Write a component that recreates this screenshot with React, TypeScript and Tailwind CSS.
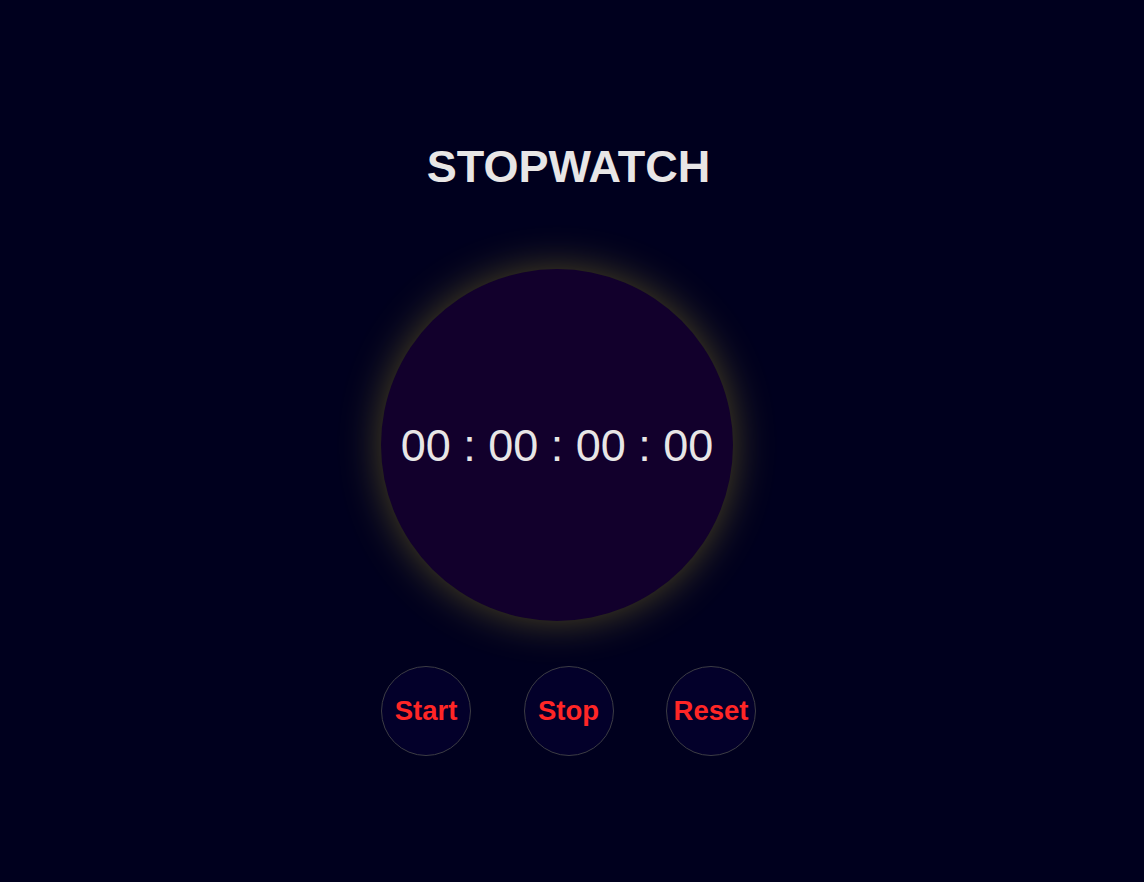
export default function App() {
  return (
    <div
      className="min-h-[882px] w-full bg-[#00001e] flex justify-center"
      style={{ fontFamily: '"Liberation Sans", Arial, sans-serif' }}
    >
      <div className="w-[382px] pt-[145px] flex flex-col">
        <div className="w-[375px] flex flex-col items-center">
          <h1 className="text-[45px] leading-[44px] font-bold text-[#e8e6e6]">STOPWATCH</h1>
        </div>
        <div className="mt-[80px] w-[352px] h-[352px] rounded-full bg-[#12002c] shadow-[0_0_40px_rgba(220,200,40,0.36)] flex items-center justify-center">
          <span className="text-[45px] leading-none text-[#e8e6e6] whitespace-pre">00 : 00 : 00 : 00</span>
        </div>
        <div className="mt-[45px] w-[375px] flex justify-between">
          {["Start", "Stop", "Reset"].map((t) => (
            <button
              key={t}
              className="w-[90px] h-[90px] rounded-full bg-[#03002a] border border-[#3c3c44] flex items-center justify-center text-[27.5px] font-bold text-[#ff2626]"
            >
              {t}
            </button>
          ))}
        </div>
      </div>
    </div>
  );
}
